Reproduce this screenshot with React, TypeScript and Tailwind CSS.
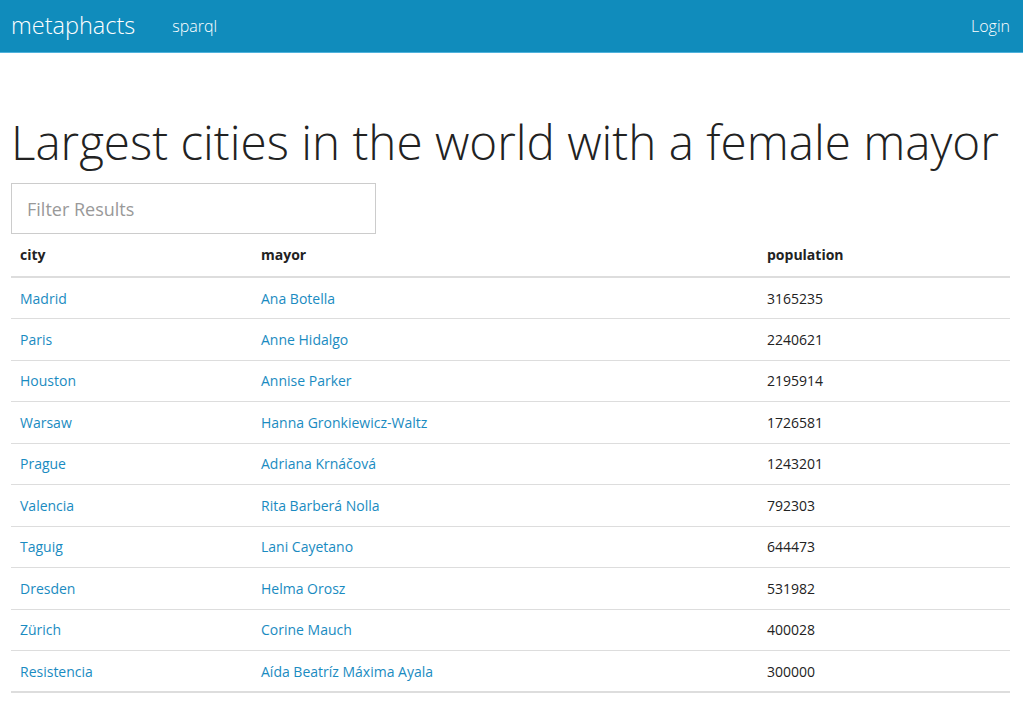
import type { FC } from 'react';

interface Row {
  city: string;
  mayor: string;
  population: number;
}

const rows: Row[] = [
  { city: 'Madrid', mayor: 'Ana Botella', population: 3165235 },
  { city: 'Paris', mayor: 'Anne Hidalgo', population: 2240621 },
  { city: 'Houston', mayor: 'Annise Parker', population: 2195914 },
  { city: 'Warsaw', mayor: 'Hanna Gronkiewicz-Waltz', population: 1726581 },
  { city: 'Prague', mayor: 'Adriana Krnáčová', population: 1243201 },
  { city: 'Valencia', mayor: 'Rita Barberá Nolla', population: 792303 },
  { city: 'Taguig', mayor: 'Lani Cayetano', population: 644473 },
  { city: 'Dresden', mayor: 'Helma Orosz', population: 531982 },
  { city: 'Zürich', mayor: 'Corine Mauch', population: 400028 },
  { city: 'Resistencia', mayor: 'Aída Beatríz Máxima Ayala', population: 300000 },
];

const Navbar: FC = () => (
  <nav className="flex h-[53px] items-center border-b border-[#4fb2dc] bg-[#108cbc] text-white">
    <a href="#" className="ml-[11px] text-[23.5px] font-light leading-none">
      metaphacts
    </a>
    <a href="#" className="ml-[37px] text-[16px] font-light">
      sparql
    </a>
    <a href="#" className="ml-auto mr-[13px] text-[16px] font-light">
      Login
    </a>
  </nav>
);

export default function App() {
  return (
    <div className="min-h-screen bg-white font-['Open_Sans',sans-serif] text-[#222]">
      <Navbar />
      <main className="pl-[11px] pr-[13px]">
        <h1 className="mt-[63px] whitespace-nowrap text-[47.6px] font-light leading-[52px] text-[#222]">
          Largest cities in the world with a female mayor
        </h1>
        <input
          type="text"
          placeholder="Filter Results"
          className="mt-[15px] block h-[51px] w-[365px] border border-[#ccc] px-[15px] text-[18px] text-[#555] placeholder:text-[#999] outline-none"
        />
        <table className="w-full border-collapse text-[14px]">
          <thead>
            <tr className="border-b-2 border-[#ddd]">
              <th className="w-[241px] px-[9px] pb-[11px] pt-[10px] text-left font-bold text-[#222]">city</th>
              <th className="w-[506px] px-[9px] pb-[11px] pt-[10px] text-left font-bold text-[#222]">mayor</th>
              <th className="px-[9px] pb-[11px] pt-[10px] text-left font-bold text-[#222]">population</th>
            </tr>
          </thead>
          <tbody>
            {rows.map((r, i) => (
              <tr
                key={r.city}
                className={i === rows.length - 1 ? 'border-b-2 border-[#ddd]' : 'border-b border-[#ddd]'}
              >
                <td className="h-[41.5px] px-[9px] align-middle">
                  <a href="#" className="text-[#1a8bc1]">{r.city}</a>
                </td>
                <td className="px-[9px] align-middle">
                  <a href="#" className="text-[#1a8bc1]">{r.mayor}</a>
                </td>
                <td className="px-[9px] align-middle text-[#222]">{r.population}</td>
              </tr>
            ))}
          </tbody>
        </table>
      </main>
    </div>
  );
}
